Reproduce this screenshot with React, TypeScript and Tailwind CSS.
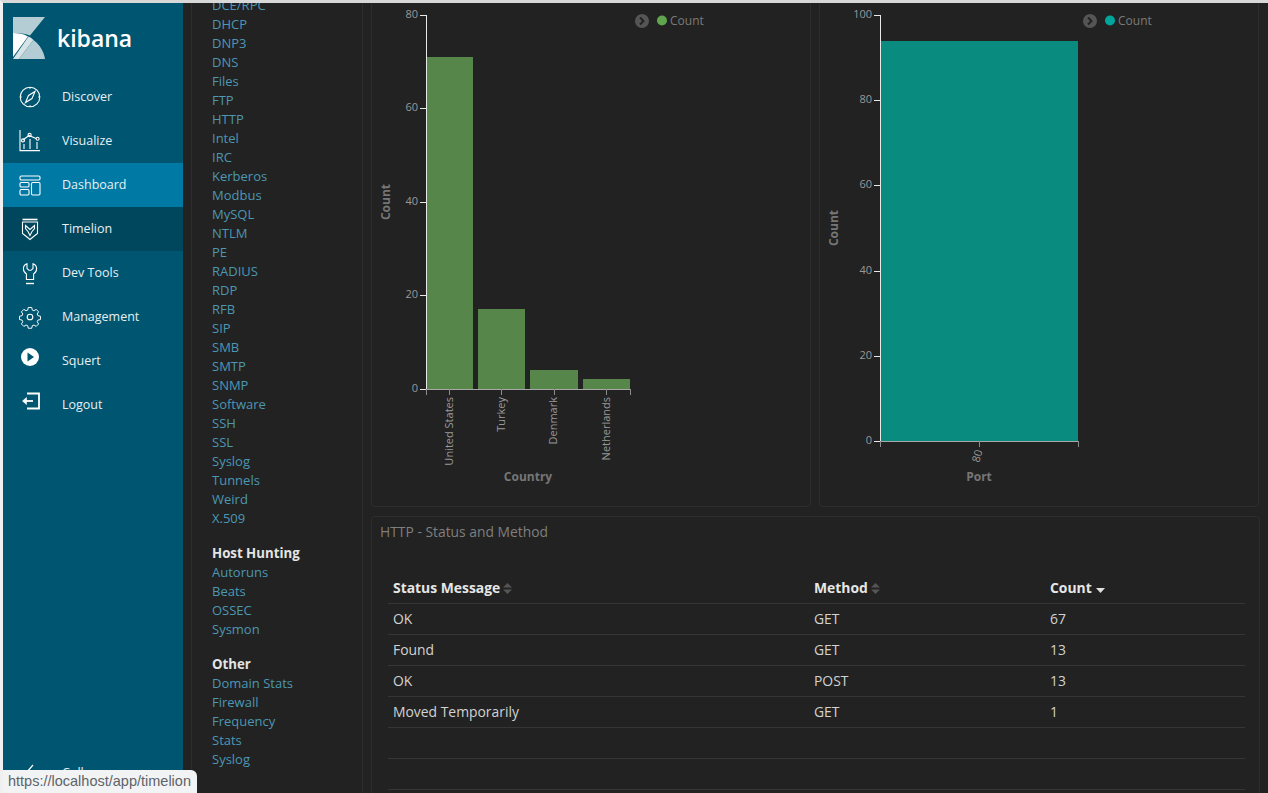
const font = { fontFamily: '"Open Sans", sans-serif' };

const iconClass = "h-6 w-6 fill-none stroke-white";

const DiscoverIcon = () => (
  <svg viewBox="0 0 24 24" className={iconClass} strokeWidth="1.1">
    <circle cx="12" cy="12" r="9.800" />
    <path d="M17 6.500l-3 7-6.500 4 3-7z" />
    <path d="M12 2.200v1.600M12 20.200v1.600M2.200 12h1.600M20.200 12h1.600" />
  </svg>
);

const VisualizeIcon = () => (
  <svg viewBox="0 0 24 24" className={iconClass} strokeWidth="1.1">
    <path d="M2 1v20.600h20" />
    <path d="M5 11l6-4.500 7 3" />
    <circle cx="5" cy="11.400" r="1.500" />
    <circle cx="11.600" cy="6" r="1.600" />
    <circle cx="19.600" cy="9.800" r="1.500" />
    <path d="M6 15v5M12 10v10M19 13v7" />
  </svg>
);

const DashboardIcon = () => (
  <svg viewBox="0 0 24 24" className={iconClass} strokeWidth="1.1">
    <rect x="2" y="3" width="20" height="4" rx="1.200" />
    <rect x="2" y="9.500" width="9" height="4.500" rx="1.200" />
    <rect x="2" y="16.500" width="9" height="5.500" rx="1.200" />
    <rect x="13.500" y="9.500" width="8.500" height="12.500" rx="1.200" />
  </svg>
);

const TimelionIcon = () => (
  <svg viewBox="0 0 24 24" className={iconClass} strokeWidth="1.1">
    <path d="M4.500 2.500h15" strokeWidth="1.600" />
    <path d="M4.500 5h15v11.500l-4.500 3.500-3 2.500-3-2.500-4.500-3.500z" />
    <path d="M7.500 8.500l4.500 4 4.500-4v3l-2.500 3-2 4-2-4-2.500-3z" />
  </svg>
);

const DevToolsIcon = () => (
  <svg viewBox="0 0 24 24" className={iconClass} strokeWidth="1.1">
    <path d="M9 2.800c-2.300.8-3.600 2.700-3.600 5 0 2.400 1.300 4.100 3 5.200v5.500h7.200v-5.500c1.700-1.100 3-2.800 3-5.200 0-2.300-1.300-4.200-3.600-5v4.700l-2 1.800h-2l-2-1.800z" />
    <path d="M8 22.500h8" strokeWidth="1.400" />
  </svg>
);

const ManagementIcon = () => (
  <svg viewBox="0 0 24 24" className={iconClass} strokeWidth="1.1">
    <path d="M10 2.200h4l.6 2.900 1.900.8 2.500-1.600 2.800 2.800-1.600 2.500.8 1.900 2.900.6v3.800l-2.900.6-.8 1.900 1.600 2.500-2.800 2.800-2.500-1.600-1.900.8-.6 2.900h-4l-.6-2.900-1.900-.8-2.500 1.600-2.800-2.800 1.600-2.500-.8-1.900-2.900-.6v-3.800l2.900-.6.8-1.900-1.600-2.500 2.800-2.800 2.500 1.600 1.900-.8z" transform="translate(12 12) scale(.88) translate(-12 -13)" />
    <circle cx="12" cy="12" r="2.800" />
  </svg>
);

const SquertIcon = () => (
  <svg viewBox="0 0 24 24" className="h-6 w-6">
    <circle cx="12" cy="12" r="9" fill="#fff" />
    <path d="M9.500 7.500l6.500 4.500-6.500 4.500z" fill="#005571" />
  </svg>
);

const LogoutIcon = () => (
  <svg viewBox="0 0 24 24" className="h-6 w-6 fill-none stroke-white" strokeWidth="1.800">
    <path d="M9 4.500h12v15H9" />
    <path d="M15 12H6" />
    <path d="M8.500 8.500L4.500 12l4 3.500z" fill="#fff" strokeWidth="0.600" />
  </svg>
);

const navItems = [
  { label: "Discover", icon: <DiscoverIcon />, bg: "", iconOffset: "" },
  { label: "Visualize", icon: <VisualizeIcon />, bg: "", iconOffset: "" },
  { label: "Dashboard", icon: <DashboardIcon />, bg: "bg-[#0079a5]", iconOffset: "" },
  { label: "Timelion", icon: <TimelionIcon />, bg: "bg-[#00465d]", iconOffset: "" },
  { label: "Dev Tools", icon: <DevToolsIcon />, bg: "", iconOffset: "" },
  { label: "Management", icon: <ManagementIcon />, bg: "", iconOffset: "" },
  { label: "Squert", icon: <SquertIcon />, bg: "", iconOffset: "-mt-2" },
  { label: "Logout", icon: <LogoutIcon />, bg: "", iconOffset: "-mt-2" },
];

const Sidebar = () => (
  <aside className="flex h-full w-[180px] shrink-0 flex-col bg-[#005571] text-[12.5px] text-[#e6f0f3]">
    <div className="flex h-[72px] items-start pl-[10px] pt-[14px]">
      <svg viewBox="0 0 32 42" className="h-[42px] w-[32px]">
        <path d="M0 0h32L17 18.500C12 16.500 6 16 0 16z" fill="#b4ccd3" />
        <path d="M0 16c6 0 10.500.700 15 3.500L0 40z" fill="#fff" />
        <path d="M0 42l15.500-22.500c2 1 3.500 2 5 3.500L6 42z" fill="#d6e4e8" />
        <path d="M6 42l14.500-19C27 28 31 35 32 42z" fill="#b4ccd3" />
      </svg>
      <span className="ml-[12px] mt-[5px] text-[23px] leading-[32px] font-semibold text-white">kibana</span>
    </div>
    {navItems.map((item) => (
      <div key={item.label} className={`flex h-[44px] items-center ${item.bg}`}>
        <span className={`ml-[15px] flex w-[24px] justify-center ${item.iconOffset}`}>{item.icon}</span>
        <span className="ml-[20px]">{item.label}</span>
      </div>
    ))}
    <div className="-mb-[2px] mt-auto flex h-[44px] shrink-0 items-center">
      <svg viewBox="0 0 24 24" className="ml-[15px] h-6 w-6 fill-none stroke-white" strokeWidth="1.200">
        <path d="M15 4l-7 8 7 8" />
      </svg>
      <span className="ml-[20px]">Collapse</span>
    </div>
  </aside>
);

const groups = [
  {
    title: "",
    links: ["DCE/RPC", "DHCP", "DNP3", "DNS", "Files", "FTP", "HTTP", "Intel", "IRC", "Kerberos", "Modbus", "MySQL", "NTLM", "PE", "RADIUS", "RDP", "RFB", "SIP", "SMB", "SMTP", "SNMP", "Software", "SSH", "SSL", "Syslog", "Tunnels", "Weird", "X.509"],
  },
  { title: "Host Hunting", links: ["Autoruns", "Beats", "OSSEC", "Sysmon"] },
  { title: "Other", links: ["Domain Stats", "Firewall", "Frequency", "Stats", "Syslog"] },
];

const LinkPanel = () => (
  <nav className="h-full w-[172px] shrink-0 overflow-hidden border-x border-[#2d2d2d] pl-[20px] text-[13px] leading-[19px]">
    <div className="-mt-[7px] flex flex-col gap-[15px]">
      {groups.map((group) => (
        <div key={group.links[0]}>
          {group.title && <h3 className="text-[13.25px] leading-[20px] font-bold text-[#e4e4e4]">{group.title}</h3>}
          {group.links.map((link) => (
            <div key={link} className="text-[#4c97b3]">{link}</div>
          ))}
        </div>
      ))}
    </div>
  </nav>
);

const axisLabel = "#999999";
const titleColor = "#767676";

type Bar = { x: number; y: number; w: number };

type ChartProps = {
  viewBox: string;
  axisX: number;
  axisTop: number;
  axisBottom: number;
  yTicks: { label: string; y: number }[];
  bars: Bar[];
  barColor: string;
  dotColor: string;
  xTicks: number[];
  xEnd: number;
  xLabels: { label: string; x: number; angle: number; y: number; anchor: "end" | "middle" }[];
  xTitle: string;
  xTitleX: number;
  yTitleX: number;
  yTitleY: number;
  legendX: number;
};

const BarChart = (c: ChartProps) => (
  <svg viewBox={c.viewBox} className="block h-full w-full" style={font}>
    {c.bars.map((b) => (
      <rect key={b.x} x={b.x} y={b.y} width={b.w} height={c.axisBottom - b.y} fill={c.barColor} />
    ))}
    <path d={`M${c.axisX + 0.5} ${c.axisTop}V${c.axisBottom}`} stroke="#e8e8e8" />
    {c.yTicks.map((t) => (
      <g key={t.label}>
        <path d={`M${c.axisX - 6} ${t.y + 0.5}H${c.axisX}`} stroke="#e8e8e8" />
        <text x={c.axisX - 8} y={t.y + 3} textAnchor="end" fontSize="11" fill={axisLabel}>{t.label}</text>
      </g>
    ))}
    <path d={`M${c.axisX} ${c.axisBottom + 0.5}H${c.xEnd}`} stroke="#a8a8a8" />
    {c.xTicks.map((x) => (
      <path key={x} d={`M${x + 0.5} ${c.axisBottom}v6`} stroke="#8c8c8c" />
    ))}
    {c.xLabels.map((l) => (
      <text key={l.label} transform={`translate(${l.x} ${l.y}) rotate(${l.angle})`} textAnchor={l.anchor} fontSize="11" fill={axisLabel}>
        {l.label}
      </text>
    ))}
    <text x={c.xTitleX} y={481} textAnchor="middle" fontSize="12" fontWeight="700" fill={titleColor}>{c.xTitle}</text>
    <text transform={`translate(${c.yTitleX} ${c.yTitleY}) rotate(-90)`} textAnchor="middle" fontSize="12" fontWeight="700" fill={titleColor}>Count</text>
    <circle cx={c.legendX} cy={21} r={7} fill="#555" />
    <path d={`M${c.legendX - 2} 17.500l3.500 3.500-3.500 3.500`} fill="none" stroke="#222" strokeWidth="2" />
    <circle cx={c.legendX + 20} cy={20.500} r={5} fill={c.dotColor} />
    <text x={c.legendX + 28} y={25} fontSize="12" fill="#7a7a7a">Count</text>
  </svg>
);

const rows = [
  ["OK", "GET", "67"],
  ["Found", "GET", "13"],
  ["OK", "POST", "13"],
  ["Moved Temporarily", "GET", "1"],
  ["", "", ""],
  ["", "", ""],
];

const SortIcon = () => (
  <svg viewBox="0 0 9 11" className="ml-[3px] h-[11px] w-[9px] fill-[#555]">
    <path d="M4.500 0L9 4.500H0zM0 6.500h9L4.500 11z" />
  </svg>
);

const headers = [
  { label: "Status Message", sort: <SortIcon /> },
  { label: "Method", sort: <SortIcon /> },
  {
    label: "Count",
    sort: (
      <svg viewBox="0 0 9 5" className="ml-[4px] mt-[5px] h-[5px] w-[9px] fill-[#e0e0e0]">
        <path d="M0 0h9L4.500 5z" />
      </svg>
    ),
  },
];

const cols = "grid grid-cols-[421px_236px_1fr] border-b border-[#353535]";

const StatusTable = () => (
  <section className="min-h-0 flex-1 overflow-hidden rounded-t border border-b-0 border-[#2d2d2d]">
    <h2 className="pl-[8px] pt-[5px] text-[13.85px] leading-[20px] text-[#7f7f7f]">HTTP - Status and Method</h2>
    <div className="ml-[16px] mr-[14px] mt-[31px] text-[13.9px] text-[#d2d2d2]">
      <div className={`${cols} h-[31px] font-bold text-[#e6e6e6]`}>
        {headers.map((h) => (
          <div key={h.label} className="flex items-center px-[5px]">
            {h.label}
            {h.sort}
          </div>
        ))}
      </div>
      {rows.map((row, i) => (
        <div key={i} className={`${cols} h-[31px]`}>
          {row.map((cell, j) => (
            <div key={j} className="flex items-center px-[5px]">{cell}</div>
          ))}
        </div>
      ))}
    </div>
  </section>
);

export default function App() {
  return (
    <div className="relative h-[793px] w-[1268px] overflow-hidden border-l-[3px] border-t-[3px] border-l-[#f0f0f0] border-t-[#d8d8d8] bg-[#222222]" style={font}>
      <div className="flex h-full">
        <Sidebar />
        <div className="flex min-w-0 flex-1 gap-[8px] pl-[8px] pr-[8px]">
          <LinkPanel />
          <main className="flex w-[889px] shrink-0 flex-col gap-[9px]">
            <div className="grid h-[504px] shrink-0 grid-cols-[440px_440px] gap-[8px]">
              <div className="overflow-hidden rounded-b border border-t-0 border-[#2d2d2d]">
                <BarChart
                  viewBox="372 3 438 503"
                  axisX={426}
                  axisTop={15}
                  axisBottom={389}
                  yTicks={[
                    { label: "80", y: 15 },
                    { label: "60", y: 108 },
                    { label: "40", y: 202 },
                    { label: "20", y: 295 },
                    { label: "0", y: 389 },
                  ]}
                  bars={[
                    { x: 426, y: 57, w: 47 },
                    { x: 478, y: 309, w: 47 },
                    { x: 530, y: 370, w: 48 },
                    { x: 583, y: 379, w: 47 },
                  ]}
                  barColor="#57864a"
                  dotColor="#5fa64e"
                  xTicks={[426, 449, 501, 554, 606, 630]}
                  xEnd={630}
                  xLabels={[
                    { label: "United States", x: 453, y: 397, angle: -90, anchor: "end" },
                    { label: "Turkey", x: 505, y: 397, angle: -90, anchor: "end" },
                    { label: "Denmark", x: 557, y: 397, angle: -90, anchor: "end" },
                    { label: "Netherlands", x: 610, y: 397, angle: -90, anchor: "end" },
                  ]}
                  xTitle="Country"
                  xTitleX={528}
                  yTitleX={390}
                  yTitleY={202}
                  legendX={642}
                />
              </div>
              <div className="overflow-hidden rounded-b border border-t-0 border-[#2d2d2d]">
                <BarChart
                  viewBox="820 3 438 503"
                  axisX={880}
                  axisTop={15}
                  axisBottom={441}
                  yTicks={[
                    { label: "100", y: 15 },
                    { label: "80", y: 100 },
                    { label: "60", y: 185 },
                    { label: "40", y: 271 },
                    { label: "20", y: 356 },
                    { label: "0", y: 441 },
                  ]}
                  bars={[{ x: 880, y: 41, w: 198 }]}
                  barColor="#0a8b80"
                  dotColor="#00a69b"
                  xTicks={[880, 979, 1078]}
                  xEnd={1078}
                  xLabels={[{ label: "80", x: 981, y: 457, angle: -75, anchor: "middle" }]}
                  xTitle="Port"
                  xTitleX={979}
                  yTitleX={838}
                  yTitleY={228}
                  legendX={1090}
                />
              </div>
            </div>
            <StatusTable />
          </main>
        </div>
      </div>
      <div className="absolute bottom-0 left-0 rounded-tr-md bg-[#f1f3f4] py-[3px] pl-[5px] pr-[6px] text-[14.5px] leading-[17px] text-[#5f6368]" style={{ fontFamily: '"Liberation Sans", sans-serif' }}>
        https://localhost/app/timelion
      </div>
    </div>
  );
}
